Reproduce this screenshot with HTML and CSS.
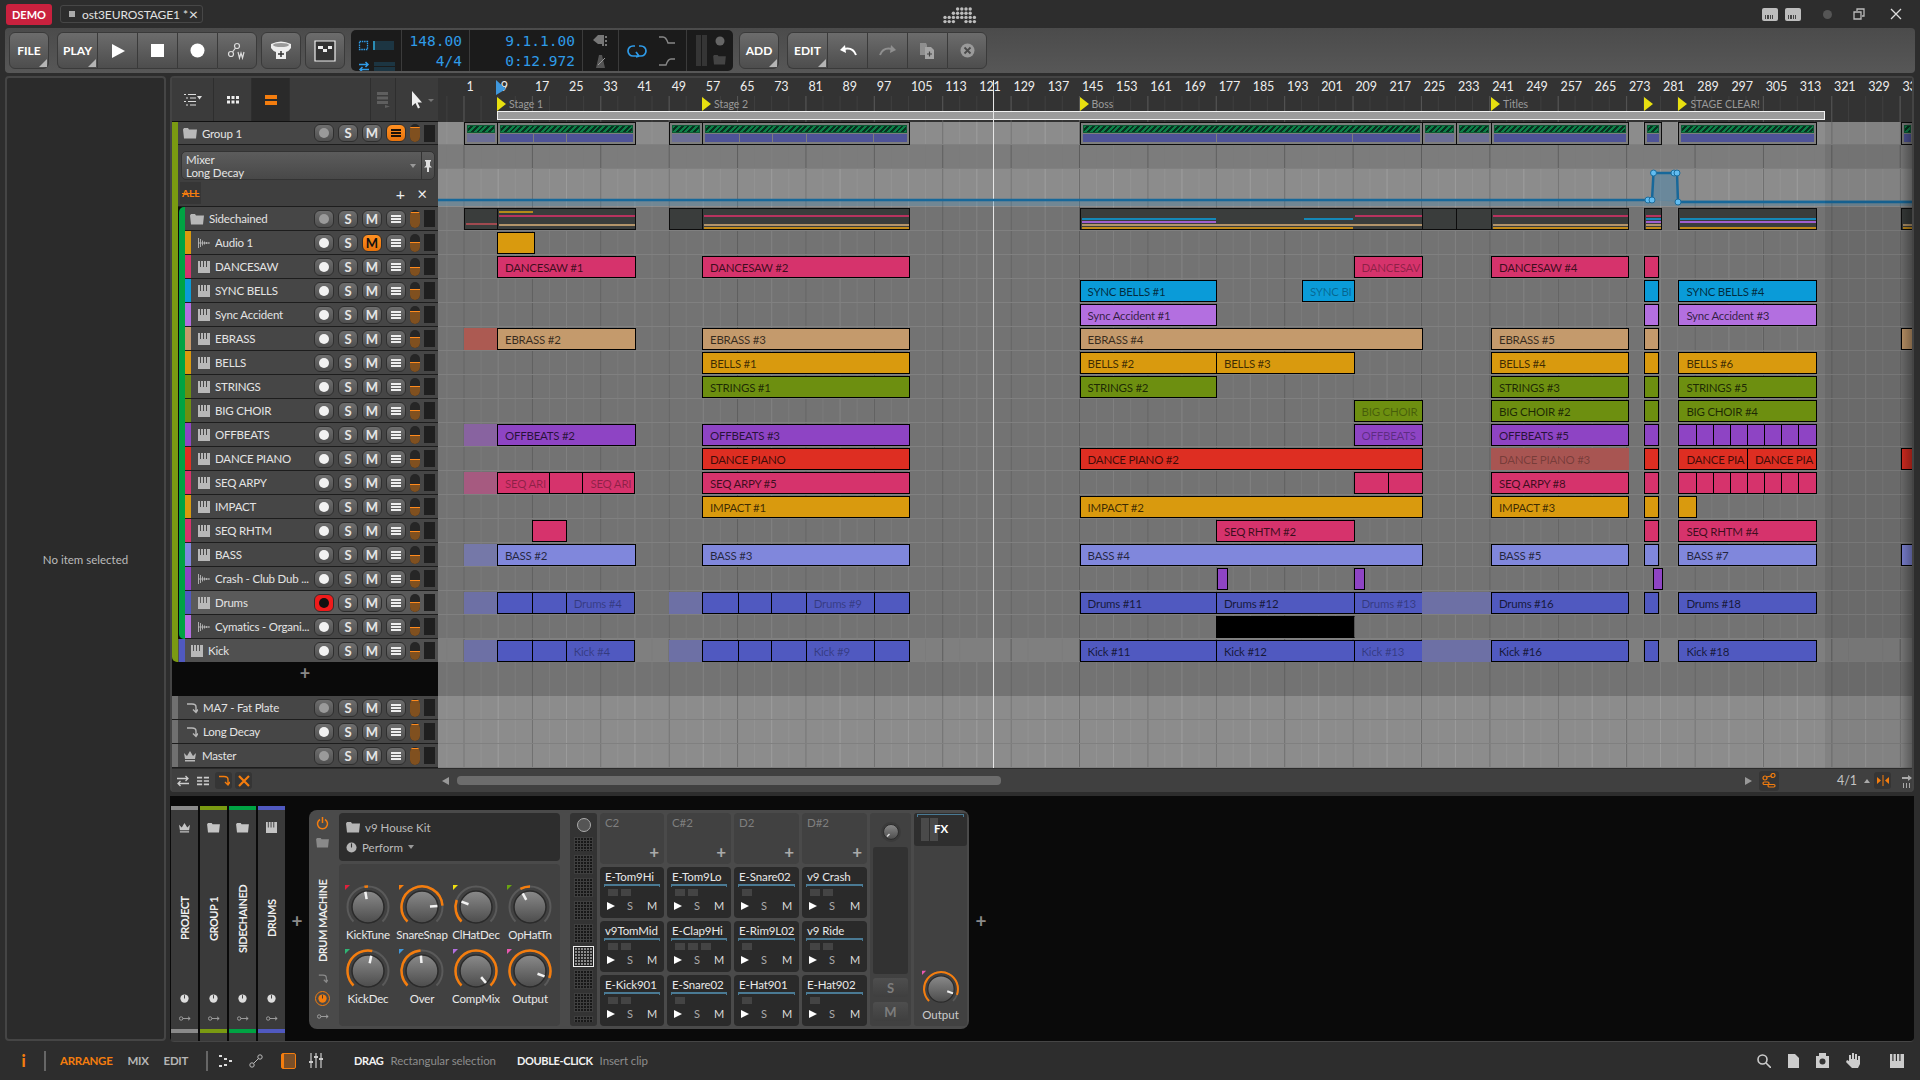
FILE: index.html
```html
<!DOCTYPE html>
<html lang="en">
<head>
    <meta charset="UTF-8">
    <title>Bitwig Studio - ost3EUROSTAGE1</title>
    <link rel="stylesheet" href="styles.css">
</head>
<body>

<!-- icon sprite -->
<svg class="sprite" width="0" height="0">
    <defs>
        <linearGradient id="knobFill" x1="0" y1="0" x2="0" y2="1">
            <stop offset="0" stop-color="#8a8a8a"/>
            <stop offset="1" stop-color="#4c4c4c"/>
        </linearGradient>
    </defs>
    <symbol id="i-folder" viewBox="0 0 14 12"><path d="M0 2.500 1 1h4l1 1.500h8L13 11.500H1z" fill="currentColor"/></symbol>
    <symbol id="i-piano" viewBox="0 0 12 12"><path d="M0 0h2v6h1V0h2v6h1V0h2v6h1V0h3v12H0z" fill="currentColor"/></symbol>
    <symbol id="i-wave" viewBox="0 0 12 12"><path d="M.5 1v10M2.500 2v8M4.500 3.500v5M6.500 4.500v3M8.500 5v2M10.500 5.600v.8M0 6h12" fill="none" stroke="currentColor" stroke-width=".9"/></symbol>
    <symbol id="i-send" viewBox="0 0 12 12"><path d="M1 2h5q4 0 4 3v5M7 7.500l3 3 2-3" fill="none" stroke="currentColor" stroke-width="1.400"/></symbol>
    <symbol id="i-crown" viewBox="0 0 14 12"><path d="M1 3l3 3 3-5 3 5 3-3-1 6H2zM2 10h10v1.500H2z" fill="currentColor"/></symbol>
    <symbol id="i-key" viewBox="0 0 14 8"><g fill="none" stroke="currentColor"><circle cx="2.500" cy="4" r="2"/><path d="M4.500 4H13M10.500 2l2.500 2-2.500 2"/></g></symbol>
    <symbol id="i-dial" viewBox="0 0 12 12"><circle cx="6" cy="6" r="5.500" fill="currentColor"/><path d="M6 1.500V6" stroke="#333" stroke-width="1.200"/></symbol>
</svg>

<header class="titlebar">
    <span class="demo">DEMO</span>
    <span class="doc-tab"><i class="doc-dot"></i><span>ost3EUROSTAGE1 *</span><b>×</b></span>
    <svg class="logo" id="logo" width="34" height="18" viewBox="0 0 34 18"></svg>
    <div class="win-icons">
        <i class="mini-keys"></i>
        <i class="mini-keys"></i>
        <i class="win-dot"></i>
        <svg width="12" height="12" viewBox="0 0 12 12" fill="none" stroke="#bbb" stroke-width="1.300"><path d="M1 4h7v7H1zM4 3V1h7v7H9"/></svg>
        <svg width="12" height="12" viewBox="0 0 12 12" fill="none" stroke="#ddd" stroke-width="1.300"><path d="M1 1l10 10M11 1 1 11"/></svg>
    </div>
</header>

<section class="toolbar">
    <button class="tbtn menu">FILE</button>
    <div class="btn-group">
        <button class="tbtn menu">PLAY</button>
        <button class="tbtn"><svg width="16" height="16" viewBox="0 0 16 16"><path d="M2 1l13 7-13 7z" fill="#fff"/></svg></button>
        <button class="tbtn"><svg width="13" height="13" viewBox="0 0 13 13"><path d="M0 0h13v13H0z" fill="#fff"/></svg></button>
        <button class="tbtn"><svg width="15" height="15" viewBox="0 0 15 15"><circle cx="7.500" cy="7.500" r="7" fill="#fff"/></svg></button>
        <button class="tbtn"><svg width="20" height="18" viewBox="0 0 20 18" fill="none" stroke="#ddd" stroke-width="1.200"><circle cx="4" cy="12" r="2.500"/><circle cx="10" cy="4" r="2.500"/><path d="M5.500 10 8.500 6"/><path d="M11 10l1.500 6 1.500-5 1.500 5 1.500-6"/></svg></button>
    </div>
    <button class="tbtn solo"><svg width="24" height="22" viewBox="0 0 24 22"><path d="M2 4q10-5 20 0v4q-2 3-5 4v7H7v-7q-3-1-5-4z" fill="#eee"/><ellipse cx="12" cy="5" rx="8" ry="2" fill="#999"/><path d="M12 11v6M9 14h6" stroke="#333" stroke-width="1.500"/></svg></button>
    <button class="tbtn solo"><svg width="22" height="22" viewBox="0 0 22 22"><path d="M1 1h20v20H1z" fill="#333" stroke="#eee" stroke-width="1.200"/><path d="M4 6h5v3H4zM9 9h4v3H9zM14 6h4v3h-4z" fill="#eee"/></svg></button>

    <div class="transport">
        <div class="tp-cell tp-cpu">
            <div class="tp-line"><svg width="11" height="11" viewBox="0 0 11 11" fill="none" stroke="#2f9be8"><path d="M1.500 1.500h8v8h-8z" stroke-dasharray="1.500 .8" stroke-width="1.300"/></svg><i class="tp-meter"></i></div>
            <div class="tp-line"><svg width="12" height="12" viewBox="0 0 12 12" fill="none" stroke="#2f9be8" stroke-width="1.500"><path d="M1 3.500h9M7.500 1l2.500 2.500L7.500 6M11 8.500H2M4.500 6 2 8.500 4.500 11"/></svg><i class="tp-meter wide"></i></div>
        </div>
        <div class="tp-cell tp-num tp-tempo"><span>148.00</span><span>4/4</span></div>
        <div class="tp-cell tp-num tp-pos"><span>9.1.1.00</span><span>0:12.972</span></div>
        <div class="tp-cell tp-icons">
            <svg width="15" height="13" viewBox="0 0 15 13"><path d="M0 6l5-5h6v9H5zM12 2h2v2h-2zM12 6h2v2h-2zM9 10h2v2H9zM12 10h2v2h-2z" fill="#777"/></svg>
            <svg width="12" height="13" viewBox="0 0 12 13"><path d="M4 0h3l3 13H1z" fill="#555"/><path d="M3 10l7-7" stroke="#999"/></svg>
        </div>
        <div class="tp-cell tp-loop">
            <svg width="20" height="14" viewBox="0 0 20 14" fill="none" stroke="#2f9be8" stroke-width="1.700"><path d="M8 2H6a5 5 0 0 0 0 10h8a5 5 0 0 0 0-10h-2M9 8l3 4-3 1"/></svg>
            <div class="tp-curves">
                <svg width="16" height="9" viewBox="0 0 16 9" fill="none" stroke="#888" stroke-width="1.400"><path d="M0 1h4q3 0 5 6h7"/></svg>
                <svg width="16" height="9" viewBox="0 0 16 9" fill="none" stroke="#888" stroke-width="1.400"><path d="M0 8h7q2-6 5-6h4"/></svg>
            </div>
        </div>
        <div class="tp-cell tp-last">
            <i class="tp-bar"></i><i class="tp-bar"></i>
            <div class="tp-last-icons">
                <svg width="10" height="10" viewBox="0 0 10 10"><circle cx="5" cy="5" r="4.500" fill="#666"/></svg>
                <svg width="13" height="11" viewBox="0 0 14 12" color="#444"><use href="#i-folder"/></svg>
            </div>
        </div>
    </div>

    <button class="tbtn menu solo add">ADD</button>
    <div class="btn-group">
        <button class="tbtn menu">EDIT</button>
        <button class="tbtn"><svg width="18" height="12" viewBox="0 0 18 12" fill="none" stroke="#fff" stroke-width="2"><path d="M17 10Q14 2 5 4"/><path d="M6 0 1 5l6 3z" fill="#fff" stroke="none"/></svg></button>
        <button class="tbtn"><svg width="18" height="12" viewBox="0 0 18 12" fill="none" stroke="#8f8f8f" stroke-width="2"><path d="M1 10Q4 2 13 4"/><path d="M12 0l5 5-6 3z" fill="#8f8f8f" stroke="none"/></svg></button>
        <button class="tbtn"><svg width="15" height="16" viewBox="0 0 15 16"><path d="M0 0h6l1 2v10H0z" fill="#8f8f8f"/><path d="M5 4h6l3 3v9H5z" fill="#a5a5a5"/><path d="M9.500 8.500v5M7 11h5" stroke="#444" stroke-width="1.200"/></svg></button>
        <button class="tbtn"><svg width="15" height="15" viewBox="0 0 15 15"><circle cx="7.500" cy="7.500" r="7" fill="#9a9a9a"/><path d="M4.500 4.500l6 6M10.500 4.500l-6 6" stroke="#4a4a4a" stroke-width="1.800"/></svg></button>
    </div>
</section>

<main class="workspace">
    <aside class="inspector">No item selected</aside>

    <div class="main-col">
        <section class="arrange">
            <div class="arrange-top">
                <div class="track-list">
                    <div class="list-head">
                        <span class="head-cell wide"><svg width="18" height="13" viewBox="0 0 18 13" fill="none" stroke="#ddd"><path d="M0 1.500h2M4 1.500h8M2 5h2M6 5h6M0 8.500h2M4 8.500h8M2 12h2M6 12h6"/><path d="M13 3h5l-2.500 3.500z" fill="#ddd" stroke="none"/></svg></span>
                        <span class="head-cell"><svg width="12" height="12" viewBox="0 0 12 12"><path d="M0 0h3v3H0zM4.500 0h3v3h-3zM9 0h3v3H9zM0 4.500h3v3H0zM4.500 4.500h3v3h-3zM9 4.500h3v3H9z" fill="#eee" transform="translate(0 2)"/></svg></span>
                        <span class="head-cell active"><svg width="12" height="10" viewBox="0 0 12 10"><path d="M0 0h12v4H0zM0 6h12v4H0z" fill="#f47d0e"/></svg></span>
                        <span class="head-gap"></span>
                        <span class="head-cell narrow"><svg width="13" height="16" viewBox="0 0 13 16" fill="#5f5f5f"><path d="M0 0h11v3H0zM0 4.500h11v3H0zM0 9h11v3H0zM8 13l5 1.500L8 16z"/></svg></span>
                        <span class="head-cell tool"><svg width="24" height="18" viewBox="0 0 24 18"><path d="M1 0v15l3.500-3 2.500 5.500 2-1-2.500-5H11z" fill="#eee"/><path d="M17 8h6l-3 3z" fill="#777"/></svg></span>
                    </div>

                    <div class="group-olive">
                        <div class="track" id="row-group"></div>
                        <div class="mixer-head">
                            <div class="mixer-select">
                                <div class="mixer-names"><span>Mixer</span><span>Long Decay</span></div>
                                <i class="caret"></i>
                                <span class="pin"><svg width="8" height="12" viewBox="0 0 8 12"><path d="M1 0h6v1.500H6v4l2 2H5v4.500H3V7.500H0l2-2v-4H1z" fill="#ddd"/></svg></span>
                            </div>
                            <div class="mixer-tools">
                                <span class="all-tag">ALL</span>
                                <span class="mixer-plus">+</span>
                                <span class="mixer-x">×</span>
                            </div>
                        </div>
                        <div class="group-green" id="inner-tracks"></div>
                        <div class="track" id="row-kick"></div>
                    </div>
                    <div class="add-track">+</div>
                    <div id="fx-tracks"></div>
                </div>

                <div class="timeline">
                    <div class="ruler">
                        <div class="ruler-nums" id="ruler-nums"></div>
                        <div class="ruler-markers" id="ruler-markers"></div>
                        <div class="loop-row"><i class="loop-bar"></i></div>
                    </div>
                    <div class="lanes" id="lanes"></div>
                    <i class="playhead"></i>
                    <svg class="playhead-flag" width="10" height="15" viewBox="0 0 10 15"><path d="M0 0l10 9-10 6z" fill="#3f97dc"/></svg>
                    <svg class="automation" width="1474" height="40" viewBox="0 0 1474 40">
                        <rect x="0" y="32" width="1474" height="6" fill="#2a7aa8" opacity=".28"/>
                        <path d="M1215 32 L1215.500 5 L1239 5 L1240 34 Z" fill="#5f87a0" opacity=".75"/>
                        <path d="M0 32H1210M1214 32 1215.500 5H1239L1240 34H1474" fill="none" stroke="#17689a" stroke-width="2.500"/>
                        <g fill="#62bdf2" stroke="#1d6d9c">
                            <circle cx="1210" cy="32" r="3"/><circle cx="1214" cy="32" r="3"/>
                            <circle cx="1215.500" cy="5" r="3"/><circle cx="1236" cy="5" r="3"/>
                            <circle cx="1239" cy="5" r="3"/><circle cx="1240" cy="34" r="3"/>
                        </g>
                    </svg>
                    <i class="past-range"></i>
                    <i class="edge-shade"></i>
                </div>
            </div>

            <div class="arrange-bar">
                <div class="bar-left">
                    <svg class="bar-swap" width="14" height="12" viewBox="0 0 14 12" fill="none" stroke="#ccc" stroke-width="1.300"><path d="M1 3.500h11M9.500 1 12 3.500 9.500 6M13 8.500H2M4.500 6 2 8.500 4.500 11"/></svg>
                    <svg class="bar-list" width="12" height="10" viewBox="0 0 14 10" fill="#ccc"><path d="M0 0h6v2H0zM0 4h6v2H0zM0 8h6v2H0zM8 0h6v2H8zM8 4h6v2H8zM8 8h6v2H8z"/></svg>
                    <span class="bar-cell"><svg width="12" height="13" viewBox="0 0 12 12" color="#f47d0e"><use href="#i-send"/></svg></span>
                    <span class="bar-cell"><svg width="12" height="12" viewBox="0 0 12 12" fill="none" stroke="#f47d0e" stroke-width="2.200"><path d="M1 1l10 10M11 1 1 11"/></svg></span>
                </div>
                <i class="tri-left"></i>
                <div class="scroll-track"><i class="scroll-thumb"></i></div>
                <i class="tri-right"></i>
                <span class="bar-cell link"><svg width="14" height="15" viewBox="0 0 14 15" fill="none" stroke="#f47d0e" stroke-width="1.200"><circle cx="3" cy="5" r="2"/><circle cx="11" cy="2.500" r="2"/><path d="M4.500 4 9 3"/><rect x="1" y="9" width="6" height="2.500" rx="1.200"/><rect x="6" y="11.500" width="7" height="2.500" rx="1.200"/></svg></span>
                <span class="grid-val">4/1</span>
                <i class="tri-up"></i>
                <span class="bar-cell snap"><svg width="12" height="11" viewBox="0 0 12 11" fill="#f47d0e"><path d="M0 2l4 3.500L0 9zM12 2 8 5.500 12 9zM5.500 0h1v11h-1z"/></svg></span>
                <svg class="bar-last" width="10" height="14" viewBox="0 0 10 14" fill="#aaa"><path d="M0 3h6V1l4 3-4 3V5H0zM1 9h1v5H1zM4 9h1v5H4zM7 9h1v5H7z"/></svg>
            </div>
        </section>

        <section class="devices">
            <div class="chain-cards" id="chain-cards"></div>
            <span class="dev-plus">+</span>
            <div class="device">
                <div class="dev-side">
                    <svg class="dev-power" width="13" height="13" viewBox="0 0 13 13" fill="none" stroke="#f47d0e" stroke-width="1.500"><path d="M4 2.500a5 5 0 1 0 5 0M6.500 0v6"/></svg>
                    <svg width="13" height="11" viewBox="0 0 14 12" color="#8a8a8a"><use href="#i-folder"/></svg>
                    <span class="dev-title">DRUM MACHINE</span>
                    <svg width="10" height="11" viewBox="0 0 12 12" color="#8a8a8a"><use href="#i-send"/></svg>
                    <span class="dev-ring"><svg width="9" height="9" viewBox="0 0 12 12" color="#f47d0e"><use href="#i-dial"/></svg></span>
                    <svg width="12" height="7" viewBox="0 0 14 8" color="#aaa"><use href="#i-key"/></svg>
                </div>

                <div class="dev-main">
                    <div class="preset">
                        <div class="preset-line"><svg width="14" height="12" viewBox="0 0 14 12" color="#b5b5b5"><use href="#i-folder"/></svg>v9 House Kit</div>
                        <div class="preset-line"><svg width="11" height="11" viewBox="0 0 12 12" color="#b5b5b5"><use href="#i-dial"/></svg>Perform <i class="caret"></i></div>
                    </div>
                    <div class="knob-grid" id="knob-grid"></div>
                </div>

                <div class="note-col" id="note-col"></div>
                <div class="pads" id="pads"></div>

                <div class="chain-mix">
                    <svg class="mix-knob" width="22" height="22" viewBox="-11 -11 22 22"><circle r="10" fill="#3a3a3a"/><circle r="7.500" fill="url(#knobFill)" stroke="#2a2a2a"/><path d="M-1.500 2-4 4.500" stroke="#ddd" stroke-width="1.500"/></svg>
                    <div class="mix-fader"></div>
                    <span class="mix-btn">S</span>
                    <span class="mix-btn">M</span>
                </div>

                <div class="fx-col">
                    <div class="fx-box"><i class="fx-bracket"></i><i class="fx-strip"></i><i class="fx-strip"></i><b>FX</b></div>
                    <div class="fx-output" id="fx-output"></div>
                </div>
            </div>
            <span class="dev-plus after">+</span>
        </section>
    </div>
</main>

<footer class="statusbar">
    <span class="st-info">i</span>
    <i class="st-sep"></i>
    <span class="st-tab on">ARRANGE</span>
    <span class="st-tab">MIX</span>
    <span class="st-tab">EDIT</span>
    <i class="st-sep"></i>
    <svg class="st-first" width="14" height="12" viewBox="0 0 14 12" fill="#ddd"><path d="M0 0h3v2H0zM5 3h3v2H5zM10 5h3v2h-3zM0 10h3v2H0zM5 9h3v2H5z"/></svg>
    <svg width="14" height="14" viewBox="0 0 14 14" fill="none" stroke="#bbb"><circle cx="3" cy="11" r="2.200"/><circle cx="11" cy="3" r="2.200"/><path d="M4.500 9.500l5-5"/></svg>
    <span class="st-panel"><i></i></span>
    <svg width="16" height="15" viewBox="0 0 16 15" fill="none" stroke="#ccc" stroke-width="1.200"><path d="M3 0v15M8 0v15M13 0v15"/><path d="M1 9h4M6 4h4M11 6h4" stroke-width="2"/></svg>
    <span class="st-hint first"><b>DRAG</b>Rectangular selection</span>
    <span class="st-hint"><b>DOUBLE-CLICK</b>Insert clip</span>
    <div class="st-right">
        <svg width="14" height="14" viewBox="0 0 14 14" fill="none" stroke="#ccc" stroke-width="1.600"><circle cx="5.500" cy="5.500" r="4.500"/><path d="M9 9l5 5"/></svg>
        <svg width="11" height="14" viewBox="0 0 11 14" fill="#ccc"><path d="M0 0h7l4 4v10H0z"/></svg>
        <svg width="13" height="15" viewBox="0 0 13 15"><path d="M3 3V0h7v3h3v12H0V3z" fill="#ccc"/><circle cx="6.500" cy="8.500" r="3" fill="#333"/></svg>
        <svg width="14" height="15" viewBox="0 0 14 15" fill="#ccc"><path d="M3 8V2h2v4h1V0h2v6h1V1h2v6h1V3h2v8l-2 4H6L0 9l1-2z"/></svg>
        <svg class="st-piano" width="14" height="14" viewBox="0 0 12 12" color="#ccc"><use href="#i-piano"/></svg>
    </div>
</footer>

<script src="script.js"></script>
</body>
</html>
```

FILE: styles.css
```css
/* base */
* {
    box-sizing: border-box;
}

html, body {
    margin: 0;
    height: 100%;
}

body {
    width: 1920px;
    height: 1080px;
    overflow: hidden;
    display: flex;
    flex-direction: column;
    background-color: #2d2d2d;
    color: #ddd;
    font-family: Lato, "Open Sans", sans-serif;
    font-size: 12px;
}

i {
    display: block;
}

.sprite {
    position: absolute;
}

/* title bar */
.titlebar {
    height: 28px;
    flex: none;
    display: flex;
    align-items: center;
    padding-left: 6px;
    position: relative;
}

.demo {
    width: 46px;
    height: 21px;
    line-height: 21px;
    text-align: center;
    background-color: #c9213e;
    border-radius: 3px;
    color: #fff;
    font-weight: 700;
    font-size: 11px;
}

.doc-tab {
    margin-left: 8px;
    width: 143px;
    height: 18px;
    display: flex;
    align-items: center;
    padding-left: 8px;
    border: 1px solid #474747;
    border-radius: 3px;
    color: #e2e2e2;
    font-size: 12px;
    letter-spacing: -0.1px;
    white-space: nowrap;
}

.doc-tab b {
    margin-left: auto;
    margin-right: 4px;
    font-size: 16px;
    font-weight: 400;
    line-height: 16px;
}

.doc-dot {
    width: 6px;
    height: 6px;
    margin-right: 7px;
    background-color: #aaa;
}

.logo {
    position: absolute;
    left: 943px;
    top: 7px;
}

.win-icons {
    margin-left: auto;
    display: flex;
    align-items: center;
    padding-right: 18px;
}

.mini-keys {
    width: 16px;
    height: 13px;
    margin-right: 7px;
    background:
        repeating-linear-gradient(90deg, #444 0 1px, transparent 1px 2.500px) 3px 7px / 10px 4px no-repeat,
        #bdbdbd;
    border-radius: 2px;
}

.win-dot {
    width: 9px;
    height: 9px;
    margin: 0 21px 0 15px;
    border-radius: 50%;
    background-color: #555;
}

.win-icons svg:last-child {
    margin-left: 25px;
}

/* tool bar */
.toolbar {
    height: 45px;
    flex: none;
    margin: 0 5px;
    padding-left: 4px;
    display: flex;
    align-items: center;
    background: linear-gradient(#4b4b4b, #575757);
    border-radius: 4px;
}

.btn-group {
    display: flex;
    margin-left: 8px;
}

.tbtn {
    width: 40px;
    height: 37px;
    padding: 0;
    display: flex;
    align-items: center;
    justify-content: center;
    position: relative;
    background: linear-gradient(#6c6c6c, #4d4d4d);
    border: 1px solid #3a3a3a;
    border-right-width: 0;
    color: #fff;
    font-family: Lato, sans-serif;
    font-size: 12px;
    font-weight: 700;
}

.toolbar > .tbtn {
    border-radius: 6px;
    border-right-width: 1px;
}

.toolbar > .solo {
    margin-left: 4px;
}

.toolbar > .add {
    margin-left: 6px;
}

.btn-group .tbtn:first-child {
    border-radius: 6px 0 0 6px;
}

.btn-group .tbtn:last-child {
    border-radius: 0 6px 6px 0;
    border-right-width: 1px;
}

.menu::after {
    content: "";
    position: absolute;
    right: 1px;
    bottom: 1px;
    border-left: 8px solid transparent;
    border-bottom: 8px solid #b5b5b5;
}

.transport {
    width: 382px;
    height: 41px;
    margin-left: 6px;
    display: flex;
    background-color: #1b1b1b;
    border-radius: 5px;
    overflow: hidden;
}

.tp-cell {
    border-right: 1px solid #3b3b3b;
    height: 100%;
}

.tp-cell:last-child {
    border-right: 0;
}

.tp-cpu {
    width: 51px;
    padding: 5px 0 0 7px;
}

.tp-line {
    height: 21px;
    display: flex;
    align-items: center;
    gap: 4px;
}

.tp-meter {
    width: 21px;
    height: 9px;
    background: linear-gradient(90deg, #2a8db5 2px, #1c3542 2px);
}

.tp-meter.wide {
    background: linear-gradient(#1c3542 40%, transparent 40% 60%, #1c3542 60%);
}

.tp-num {
    display: flex;
    flex-direction: column;
    align-items: flex-end;
    justify-content: center;
    gap: 2px;
    color: #2f9be8;
    font-family: "DejaVu Sans Mono", monospace;
    font-size: 14.500px;
    line-height: 18px;
    padding-right: 7px;
}

.tp-tempo {
    width: 68px;
}

.tp-pos {
    width: 113px;
}

.tp-icons {
    width: 36px;
    display: flex;
    flex-direction: column;
    align-items: center;
    justify-content: center;
    gap: 8px;
}

.tp-loop {
    width: 68px;
    display: flex;
    align-items: center;
    justify-content: space-between;
    padding: 0 11px 0 8px;
}

.tp-curves {
    display: flex;
    flex-direction: column;
    gap: 12px;
}

.tp-last {
    width: 46px;
    display: flex;
    align-items: center;
    padding-left: 9px;
    gap: 1px;
}

.tp-bar {
    width: 5px;
    height: 31px;
    background-color: #353535;
}

.tp-last-icons {
    display: flex;
    flex-direction: column;
    align-items: center;
    gap: 8px;
    margin-left: 5px;
}

/* main layout */
.workspace {
    flex: none;
    height: 965px;
    margin-top: 3px;
    padding: 0 6px 0 5px;
    display: flex;
}

.inspector {
    width: 161px;
    display: flex;
    align-items: center;
    justify-content: center;
    padding-top: 2px;
    background-color: #2b2b2b;
    border: 2px solid #454545;
    border-radius: 4px;
    color: #bbb;
    font-size: 11.500px;
}

.main-col {
    width: 1744px;
    margin-left: 4px;
    display: flex;
    flex-direction: column;
}

.arrange {
    height: 716px;
    flex: none;
    padding: 2px 2px 0 2px;
    background-color: #444;
    border-radius: 4px;
    display: flex;
    flex-direction: column;
}

.arrange-top {
    height: 690px;
    flex: none;
    display: flex;
}

/* track list */
.track-list {
    width: 266px;
    flex: none;
    background-color: #0a0a0a;
}

.list-head {
    height: 44px;
    display: flex;
    background-color: #3b3b3b;
    border-bottom: 1px solid #111;
}

.head-cell {
    width: 38px;
    display: flex;
    align-items: center;
    justify-content: center;
    border-right: 1px solid #2e2e2e;
}

.head-cell.wide {
    width: 42px;
}

.head-cell.active {
    background-color: #2a2a2a;
}

.head-cell.narrow {
    width: 26px;
    border-left: 1px solid #2e2e2e;
}

.head-cell.tool {
    width: 42px;
    padding-left: 15px;
    justify-content: flex-start;
    border-right: 0;
}

.head-gap {
    flex: 1;
}

.group-olive {
    border-left: 6px solid #7a9a12;
    border-radius: 0 0 0 5px;
}

.group-green {
    margin-left: 1px;
    border-left: 6px solid #00a343;
    border-radius: 5px 0 0 5px;
}

.track {
    height: 24px;
    display: flex;
    align-items: center;
    background-color: #464646;
    border-bottom: 1px solid #1d1d1d;
    color: #e4e4e4;
    font-size: 11.500px;
    letter-spacing: -0.2px;
}

#row-group {
    height: 23px;
}

#row-kick {
    height: 23px;
    background-color: #505050;
    border-bottom: 0;
}

.track.selected {
    background-color: #5a5a5a;
}

.track-color {
    width: 6px;
    height: 100%;
    flex: none;
}

.track-icon {
    flex: none;
    margin-right: 5px;
    color: #b8b8b8;
}

.track-name {
    flex: 1;
    white-space: nowrap;
    overflow: hidden;
}

.track-ctrl {
    width: 124px;
    flex: none;
    display: flex;
    align-items: center;
    gap: 4px;
}

.ctl {
    width: 20px;
    height: 18px;
    display: flex;
    align-items: center;
    justify-content: center;
    background: linear-gradient(#6e6e6e, #4f4f4f);
    border: 1px solid #2f2f2f;
    border-radius: 6px;
    color: #e6e6e6;
    font-size: 13px;
    font-weight: 700;
    letter-spacing: 0;
}

.ctl.rec i {
    width: 10px;
    height: 10px;
    border-radius: 50%;
    background-color: #f2f2f2;
}

.ctl.rec.off i {
    background-color: #9a9a9a;
}

.ctl.rec.arm {
    background: #ef1b1b;
}

.ctl.rec.arm i {
    background-color: #111;
}

.ctl.on {
    background: linear-gradient(#ff9022, #e8730c);
    color: #111;
}

.ctl.lines i {
    width: 10px;
    height: 8px;
    background: repeating-linear-gradient(#eee 0 2px, transparent 2px 3px);
}

.ctl.on.lines i {
    background: repeating-linear-gradient(#1d1208 0 2px, transparent 2px 3px);
}

.fader {
    width: 10px;
    height: 18px;
    display: flex;
    flex-direction: column;
    justify-content: flex-end;
    background-color: #262626;
    border-radius: 5px;
    overflow: hidden;
}

.fader i {
    background-color: #80501f;
    border-top: 1px solid #ff8a1c;
}

.meter {
    width: 11px;
    height: 17px;
    background-color: #1f1f1f;
}

.mixer-head {
    height: 62px;
    background-color: #3f3f3f;
    padding: 6px 3px 0 3px;
    border-bottom: 1px solid #1d1d1d;
}

.mixer-select {
    height: 29px;
    display: flex;
    align-items: center;
    background: linear-gradient(#5c5c5c, #484848);
    border: 1px solid #333;
    border-radius: 5px;
    color: #e4e4e4;
    font-size: 11.500px;
    letter-spacing: -0.1px;
    line-height: 13px;
}

.mixer-names {
    flex: 1;
    display: flex;
    flex-direction: column;
    padding-left: 4px;
}

.caret {
    border-left: 3px solid transparent;
    border-right: 3px solid transparent;
    border-top: 4px solid #999;
}

.mixer-select .caret {
    margin-right: 5px;
}

.pin {
    width: 13px;
    height: 100%;
    display: flex;
    align-items: center;
    justify-content: center;
    border-left: 1px solid #333;
}

.mixer-tools {
    display: flex;
    align-items: center;
    height: 26px;
    margin-left: -1px;
}

.all-tag {
    padding: 5px 2px;
    background-color: #363636;
    color: #f47d0e;
    font-size: 10px;
    font-weight: 700;
    text-decoration: line-through;
}

.mixer-plus {
    margin-left: auto;
    margin-right: 12px;
    color: #eee;
    font-size: 16px;
}

.mixer-x {
    margin-right: 8px;
    color: #eee;
    font-size: 17px;
}

.add-track {
    height: 34px;
    display: flex;
    align-items: flex-start;
    justify-content: center;
    color: #888;
    font-size: 18px;
    font-weight: 700;
    line-height: 20px;
    padding-top: 1px;
}

.track.fx .track-color {
    width: 6px;
    background-color: #707070;
}

/* timeline */
.timeline {
    flex: 1;
    position: relative;
    display: flex;
    flex-direction: column;
    overflow: hidden;
}

.ruler {
    height: 44px;
    flex: none;
    background:
        linear-gradient(90deg, #555 1px, transparent 1px) 25.500px 0 / 68.400px 100%,
        linear-gradient(90deg, #3f3f3f 1px, transparent 1px) 25.500px 0 / 17.100px 100%,
        #333;
}

.ruler-nums {
    height: 18px;
    padding-left: 25.500px;
    display: flex;
    align-items: flex-end;
    background-color: #333;
    color: #eee;
    font-size: 12.500px;
    letter-spacing: -0.1px;
    line-height: 18px;
}

.ruler-nums span {
    width: 34.200px;
    flex: none;
    padding-left: 3px;
    white-space: nowrap;
}

.ruler-markers {
    height: 15px;
    position: relative;
}

.marker {
    position: absolute;
    top: 1px;
    display: flex;
    align-items: center;
    color: #9a9a9a;
    font-size: 10.500px;
    line-height: 13px;
}

.marker::before {
    content: "";
    margin-right: 3px;
    border-top: 7px solid transparent;
    border-bottom: 7px solid transparent;
    border-left: 9px solid #e8e010;
}

.loop-row {
    height: 11px;
    padding-top: 0;
}

.loop-bar {
    margin-left: 59px;
    width: 1328px;
    height: 9px;
    background-color: #9b9b9b;
    border: 1px solid #f2f2f2;
}

.lanes {
    flex: 1;
}

.lane {
    position: relative;
    height: 24px;
    border-bottom: 1px solid #808080;
    background-color: #737373;
    background-image:
        linear-gradient(90deg, #5d5d5d 1px, transparent 1px),
        linear-gradient(90deg, #808080 1px, transparent 1px),
        linear-gradient(90deg, #7b7b7b 1px, transparent 1px);
    background-size: 68.400px 100%, 34.200px 100%, 17.100px 100%;
    background-position: 25.500px 0;
}

.lane.bright {
    background-color: #8c8c8c;
    border-bottom-color: #808080;
    background-image:
        linear-gradient(90deg, #6c6c6c 1px, transparent 1px),
        linear-gradient(90deg, #9b9b9b 1px, transparent 1px),
        linear-gradient(90deg, #939393 1px, transparent 1px);
}

.lane.mid {
    background-color: #7c7c7c;
}

.lane.kick {
    background-color: #7f7f7f;
    height: 23px;
}

.lane.group-lane {
    height: 23px;
}

.lane.tall {
    height: 38px;
    border-bottom: 0;
}

.lane.blank {
    height: 34px;
    border-bottom: 0;
}

.clip {
    position: absolute;
    top: 1px;
    height: 22px;
    padding-left: 7px;
    border: 1px solid #000;
    color: rgba(0, 0, 0, 0.72);
    font-size: 11.500px;
    letter-spacing: -0.25px;
    line-height: 22px;
    white-space: nowrap;
    overflow: hidden;
}

.clip.dim {
    color: rgba(0, 0, 0, 0.34);
}

.clip.ghost {
    border-color: transparent;
}

.clip.black {
    background-color: #000;
    border-right-color: #555;
}

.fold {
    padding: 1px;
    background-color: #3a3d3c;
    border-color: #0c0c0c;
}

.fold.top {
    top: 0;
    height: 23px;
    padding: 2px;
    background-color: #7d7d7d;
    display: flex;
    flex-direction: column;
    gap: 1px;
}

.hatch {
    height: 8px;
    flex: none;
    background: repeating-linear-gradient(135deg, #0d8048 0 2px, #08301f 2px 4px);
    border: 1px solid #0c5a34;
}

.lowers {
    flex: 1;
    display: flex;
    gap: 1px;
}

.lowers i {
    background-color: #4e5397;
}

.lowers.pale i {
    background-color: #6b6e94;
}

.stripe {
    position: absolute;
    height: 2px;
}

.playhead {
    position: absolute;
    left: 555px;
    top: 2px;
    bottom: 0;
    width: 1px;
    background-color: #e6e6e6;
}

.playhead-flag {
    position: absolute;
    left: 58px;
    top: 2px;
}

.automation {
    position: absolute;
    left: 0;
    top: 90px;
}

.past-range {
    position: absolute;
    left: 1387px;
    right: 0;
    top: 44px;
    bottom: 0;
    background-color: rgba(0, 0, 0, 0.07);
}

.edge-shade {
    position: absolute;
    right: 0;
    top: 44px;
    bottom: 0;
    width: 12px;
    background: linear-gradient(90deg, rgba(0, 0, 0, 0), rgba(0, 0, 0, 0.3));
}

/* bottom bar of the arranger */
.arrange-bar {
    flex: 1;
    display: flex;
    align-items: center;
    padding: 0 0 0 4px;
    border-top: 1px solid #2b2b2b;
    background-color: #404040;
}

.bar-left {
    width: 267px;
    display: flex;
    align-items: center;
    gap: 3px;
}

.bar-swap {
    margin-right: 4px;
}

.bar-list {
    margin-right: 3px;
}

.bar-cell {
    width: 17px;
    height: 17px;
    display: flex;
    align-items: center;
    justify-content: center;
    background-color: #353535;
    border-radius: 3px;
}

.tri-left {
    border-top: 4px solid transparent;
    border-bottom: 4px solid transparent;
    border-right: 7px solid #999;
}

.scroll-track {
    width: 1287px;
    margin-left: 8px;
}

.scroll-thumb {
    width: 544px;
    height: 9px;
    background-color: #6c6c6c;
    border-radius: 4px;
}

.tri-right {
    margin-left: 6px;
    border-top: 4px solid transparent;
    border-bottom: 4px solid transparent;
    border-left: 7px solid #999;
}

.bar-cell.link {
    width: 20px;
    height: 20px;
    margin-left: 7px;
}

.grid-val {
    margin-left: 58px;
    color: #c4c4c4;
    font-size: 12.500px;
}

.tri-up {
    margin-left: 7px;
    border-left: 3px solid transparent;
    border-right: 3px solid transparent;
    border-bottom: 4px solid #aaa;
}

.bar-cell.snap {
    margin-left: 4px;
}

.bar-last {
    margin-left: 11px;
}

/* device panel */
.devices {
    flex: 1;
    margin-top: 4px;
    display: flex;
    align-items: flex-start;
    background-color: #0a0a0a;
    border-bottom: 1px solid #454545;
    border-radius: 0 0 4px 4px;
}

.chain-cards {
    display: flex;
    gap: 2px;
    margin-left: 1px;
    margin-top: 10px;
}

.card {
    width: 27px;
    height: 235px;
    display: flex;
    flex-direction: column;
    align-items: center;
    background-color: #3a3a3a;
    color: #c4c4c4;
}

.card-strip {
    width: 100%;
    height: 4px;
    flex: none;
}

.card-icon {
    margin-top: 12px;
}

.card-label {
    flex: 1;
    margin-top: 10px;
    display: flex;
    align-items: center;
    justify-content: center;
    writing-mode: vertical-rl;
    transform: rotate(180deg);
    color: #f0f0f0;
    font-size: 11px;
    font-weight: 700;
    letter-spacing: -0.5px;
}

.card-dial {
    margin-bottom: 12px;
}

.card-key {
    margin-bottom: 7px;
}

.card-strip.low {
    margin-bottom: 8px;
}

.dev-plus {
    width: 24px;
    flex: none;
    margin-top: 113px;
    text-align: center;
    color: #8a8a8a;
    font-size: 19px;
    font-weight: 700;
}

.device {
    width: 660px;
    height: 219px;
    flex: none;
    margin-top: 14px;
    padding: 3px 2px 3px 0;
    display: flex;
    background-color: #4a4a4a;
    border-radius: 8px;
}

.dev-side {
    width: 27px;
    flex: none;
    display: flex;
    flex-direction: column;
    align-items: center;
    padding: 4px 0 6px 0;
    gap: 7px;
}

.dev-title {
    flex: 1;
    margin-top: 20px;
    display: flex;
    align-items: center;
    justify-content: center;
    writing-mode: vertical-rl;
    transform: rotate(180deg);
    color: #eee;
    font-size: 11px;
    font-weight: 700;
    letter-spacing: -0.5px;
}

.dev-ring {
    width: 15px;
    height: 15px;
    display: flex;
    align-items: center;
    justify-content: center;
    border: 1.500px solid #f47d0e;
    border-radius: 50%;
}

.dev-main {
    width: 221px;
    flex: none;
    margin-left: 3px;
    display: flex;
    flex-direction: column;
    gap: 3px;
}

.preset {
    height: 48px;
    padding-top: 4px;
    background-color: #2d2d2d;
    border-radius: 4px;
    color: #bcbcbc;
    font-size: 11.500px;
}

.preset-line {
    height: 20px;
    display: flex;
    align-items: center;
    gap: 5px;
    padding-left: 7px;
}

.knob-grid {
    flex: 1;
    display: grid;
    grid-template-columns: repeat(4, 54px);
    grid-auto-rows: 64px;
    padding: 20px 0 0 2px;
    background-color: #414141;
    border-radius: 4px;
}

.knob {
    display: flex;
    flex-direction: column;
    align-items: center;
    color: #eaeaea;
    font-size: 11.500px;
    letter-spacing: -0.15px;
    line-height: 14px;
    white-space: nowrap;
}

.knob span {
    margin-top: -2px;
}

.note-col {
    width: 27px;
    flex: none;
    margin-left: 10px;
    display: flex;
    flex-direction: column;
    align-items: center;
    padding-top: 5px;
    gap: 4px;
    background-color: #333;
    border-radius: 3px;
}

.note-clock {
    width: 14px;
    height: 14px;
    margin-bottom: 1px;
    border: 1.500px solid #aaa;
    border-radius: 50%;
    background-color: #555;
}

.note-block {
    width: 19px;
    height: 19px;
    background:
        linear-gradient(90deg, #3f3f3f 1px, transparent 1px) 0 0 / 3px 100%,
        linear-gradient(#3f3f3f 1px, transparent 1px) 0 0 / 100% 3px,
        #181818;
}

.note-block.first {
    height: 14px;
}

.note-block.sel {
    background:
        linear-gradient(90deg, #222 1px, transparent 1px) 0 0 / 3px 100%,
        linear-gradient(#222 1px, transparent 1px) 0 0 / 100% 3px,
        #8a8a8a;
    outline: 1px solid #eee;
}

.note-block.tiny {
    height: 6px;
}

.pads {
    margin-left: 3px;
    display: grid;
    grid-template-columns: 64px 64px 65px 65px;
    grid-template-rows: repeat(4, 51px);
    gap: 3px;
}

.pad {
    padding: 2px 5px 0 5px;
    background-color: #2a2a2a;
    border-radius: 4px;
    color: #e8e8e8;
    font-size: 11.500px;
    letter-spacing: -0.1px;
    line-height: 15px;
    white-space: nowrap;
}

.pad.empty {
    display: flex;
    flex-direction: column;
    background-color: #414141;
    color: #7f7f7f;
}

.pad-plus {
    margin-top: auto;
    margin-bottom: 5px;
    align-self: flex-end;
    color: #aaa;
    font-size: 17px;
    font-weight: 700;
    line-height: 14px;
}

.pad-bracket {
    height: 3px;
    margin: 0 -1px 2px -1px;
    border: 1px solid #4a7a94;
    border-width: 2px 1px 0 1px;
}

.pad-cells {
    height: 7px;
    display: flex;
    gap: 3px;
    padding-left: 3px;
}

.pad-cells i {
    width: 10px;
    background-color: #444;
}

.pad-foot {
    margin-top: 4px;
    display: flex;
    align-items: center;
    color: #aaa;
    font-size: 11px;
    line-height: 12px;
    padding-left: 2px;
}

.pad-foot span:first-of-type {
    margin-left: 12px;
}

.pad-foot span:last-of-type {
    margin-left: auto;
    margin-right: 2px;
    color: #ddd;
}

.pad-play {
    border-top: 4px solid transparent;
    border-bottom: 4px solid transparent;
    border-left: 8px solid #fff;
}

.chain-mix {
    width: 41px;
    flex: none;
    margin-left: 3px;
    padding: 8px 3px 0 3px;
    display: flex;
    flex-direction: column;
    align-items: center;
    background-color: #414141;
    border-radius: 3px;
}

.mix-knob {
    margin-bottom: 4px;
}

.mix-fader {
    width: 100%;
    height: 128px;
    margin-bottom: 4px;
    background-color: #323232;
    border-radius: 3px;
}

.mix-btn {
    width: 100%;
    height: 19px;
    margin-bottom: 5px;
    display: flex;
    align-items: center;
    justify-content: center;
    background: linear-gradient(#4e4e4e, #3f3f3f);
    border-radius: 3px;
    color: #7d7d7d;
    font-size: 13px;
    font-weight: 700;
}

.fx-col {
    width: 53px;
    flex: none;
    margin-left: 3px;
    display: flex;
    flex-direction: column;
    background-color: #414141;
    border-radius: 3px;
}

.fx-box {
    height: 33px;
    display: flex;
    gap: 1px;
    padding: 5px 0 0 7px;
    position: relative;
    background-color: #2e2e2e;
    border-radius: 3px;
    color: #fff;
    font-size: 11.500px;
}

.fx-box b {
    margin: 4px 0 0 -5px;
}

.fx-bracket {
    position: absolute;
    left: 3px;
    right: 3px;
    top: 1px;
    height: 3px;
    border: 1px solid #4a7a94;
    border-bottom: 0;
}

.fx-strip {
    width: 8px;
    height: 23px;
    background-color: #4a4a4a;
}

.fx-output {
    margin-top: auto;
    margin-bottom: 4px;
    display: flex;
    flex-direction: column;
    align-items: center;
    color: #ccc;
    font-size: 11.500px;
    line-height: 14px;
}

/* status bar */
.statusbar {
    flex: 1;
    display: flex;
    align-items: center;
    padding-left: 21px;
    font-size: 11.500px;
    letter-spacing: -0.1px;
}

.st-info {
    width: 5px;
    color: #f47d0e;
    font-size: 16px;
    font-weight: 900;
    text-align: center;
}

.st-sep {
    width: 2px;
    height: 20px;
    margin: 0 14px 0 18px;
    background-color: #666;
}

.st-tab {
    margin-right: 15px;
    color: #b5b5b5;
    font-weight: 700;
    letter-spacing: -0.3px;
}

.st-tab.on {
    color: #f47d0e;
}

.st-tab:nth-of-type(4) {
    margin-right: 0;
}

.statusbar > svg {
    margin-right: 16px;
}

.statusbar > .st-first {
    margin-left: -3px;
}

.st-panel {
    width: 15px;
    height: 16px;
    margin: 0 12px 0 2px;
    border: 1.500px solid #f47d0e;
    border-radius: 2px;
    background: linear-gradient(90deg, #f47d0e 2px, #7a4f28 2px);
}

.st-hint {
    display: flex;
    gap: 7px;
    color: #8c8c8c;
    margin-right: 21px;
}

.st-hint.first {
    margin-left: 14px;
}

.st-hint b {
    color: #f2f2f2;
    font-size: 11px;
    letter-spacing: -0.35px;
}

.st-right {
    margin-left: auto;
    display: flex;
    align-items: center;
    gap: 17px;
    padding-right: 16px;
}

.st-piano {
    margin-left: 13px;
}
```

FILE: script.js
```js
// Colori delle tracce
const PINK = "#d6336c", BLUE = "#0a9bd8", LILAC = "#b36fe0", TAN = "#c49a6c", GOLD = "#d99a0e";
const OLIVE = "#6d8f10", PURPLE = "#8e44c4", RED = "#de2e22", PERI = "#8087dc", INDIGO = "#5059c0";

// Ogni posizione e' la x nello screenshot, ORIGIN e' il bordo sinistro della timeline
const ORIGIN = 438;
const A = 497, B = 634.5, C = 702, D = 908.6, E = 1079.6, F = 1216, G = 1353.5, H = 1421.7;
const I = 1491, J = 1628, K = 1644.4, L = 1657.8, M = 1678.4, N = 1815.6, O = 1901, END = 1913, Z = 463.5;

function eight() {
    const out = [];
    for (let n = 0; n < 8; n++) {
        out.push([M + n * 17.15, M + (n + 1) * 17.15]);
    }
    return out;
}

function drumClips(n, a, b) {
    return [
        [A, 531.5], [531.5, 565.7], [565.7, B, n + " " + a, "dim"],
        [668.6, C, "", "ghost", "#6d70a5"],
        [C, 738], [738, 771], [771, 805.7], [805.7, 874, n + " " + b, "dim"], [874, D],
        [E, F, n + " #11"], [F, G, n + " #12"], [G, H, n + " #13", "dim"],
        [H, I, "", "ghost", "#6d70a5"],
        [I, J, n + " #16"], [K, L], [M, N, n + " #18"]
    ];
}

const TRACKS = [
    { name: "Audio 1", color: GOLD, icon: "wave", mute: true, level: 55, clips: [[A, 534]] },
    { name: "DANCESAW", color: PINK, icon: "piano", level: 50, clips: [[A, B, "DANCESAW #1"], [C, D, "DANCESAW #2"], [G, H, "DANCESAV", "dim"], [I, J, "DANCESAW #4"], [K, L]] },
    { name: "SYNC BELLS", color: BLUE, icon: "piano", level: 60, clips: [[E, F, "SYNC BELLS #1"], [1302, G, "SYNC BI", "dim"], [K, L], [M, N, "SYNC BELLS #4"]] },
    { name: "Sync Accident", color: LILAC, icon: "piano", level: 70, clips: [[E, F, "Sync Accident #1"], [K, L], [M, N, "Sync Accident #3"]] },
    { name: "EBRASS", color: TAN, icon: "piano", level: 60, ghost: "#ac5a52", clips: [[A, B, "EBRASS #2"], [C, D, "EBRASS #3"], [E, H, "EBRASS #4"], [I, J, "EBRASS #5"], [K, L], [O, END]] },
    { name: "BELLS", color: GOLD, icon: "piano", level: 55, clips: [[C, D, "BELLS #1"], [E, F, "BELLS #2"], [F, G, "BELLS #3"], [I, J, "BELLS #4"], [K, L], [M, N, "BELLS #6"]] },
    { name: "STRINGS", color: OLIVE, icon: "piano", level: 55, clips: [[C, D, "STRINGS #1"], [E, F, "STRINGS #2"], [I, J, "STRINGS #3"], [K, L], [M, N, "STRINGS #5"]] },
    { name: "BIG CHOIR", color: OLIVE, icon: "piano", level: 55, clips: [[G, H, "BIG CHOIR", "dim"], [I, J, "BIG CHOIR #2"], [K, L], [M, N, "BIG CHOIR #4"]] },
    { name: "OFFBEATS", color: PURPLE, icon: "piano", level: 50, ghost: "#8863a0", clips: [[A, B, "OFFBEATS #2"], [C, D, "OFFBEATS #3"], [G, H, "OFFBEATS", "dim"], [I, J, "OFFBEATS #5"], [K, L], ...eight()] },
    { name: "DANCE PIANO", color: RED, icon: "piano", level: 50, clips: [[C, D, "DANCE PIANO"], [E, H, "DANCE PIANO #2"], [I, J, "DANCE PIANO #3", "muted"], [K, L], [M, 1747, "DANCE PIA"], [1747, N, "DANCE PIA"], [O, END]] },
    { name: "SEQ ARPY", color: PINK, icon: "piano", level: 40, ghost: "#a65a80", clips: [[A, 548.6, "SEQ ARI", "dim"], [548.6, 582.4], [582.4, B, "SEQ ARI", "dim"], [C, D, "SEQ ARPY #5"], [G, 1387.6], [1387.6, H], [I, J, "SEQ ARPY #8"], [K, L], ...eight()] },
    { name: "IMPACT", color: GOLD, icon: "piano", level: 50, clips: [[C, D, "IMPACT #1"], [E, H, "IMPACT #2"], [I, J, "IMPACT #3"], [K, L], [M, 1696]] },
    { name: "SEQ RHTM", color: PINK, icon: "piano", level: 50, clips: [[531.5, 565.7], [F, G, "SEQ RHTM #2"], [K, L], [M, N, "SEQ RHTM #4"]] },
    { name: "BASS", color: PERI, icon: "piano", level: 50, ghost: "#7578a8", clips: [[A, B, "BASS #2"], [C, D, "BASS #3"], [E, H, "BASS #4"], [I, J, "BASS #5"], [K, L], [M, N, "BASS #7"], [O, END]] },
    { name: "Crash - Club Dub ...", color: PURPLE, icon: "wave", level: 40, clips: [[1217, 1227], [G, 1364], [1653, 1662]] },
    { name: "Drums", color: INDIGO, icon: "piano", level: 55, arm: true, ghost: "#6d70a5", clips: drumClips("Drums", "#4", "#9") },
    { name: "Cymatics - Organi...", color: LILAC, icon: "wave", level: 50, clips: [[F, G, "", "black"]] }
];

const FX_TRACKS = [
    { name: "MA7 - Fat Plate", icon: "send", off: true, level: 90 },
    { name: "Long Decay", icon: "send", level: 90 },
    { name: "Master", icon: "crown", off: true, level: 90 }
];

// Clip delle cartelle: [inizio, fine, tagli dei segmenti, pallido]
const GROUP_CLIPS = [
    [Z, A, [], true], [A, B, [531.5, 565.7]], [668.6, C, [], true], [C, D, [738, 771, 805.7, 874]],
    [E, H, [F, G]], [H, 1456, [], true], [1456, I, [], true], [I, J, []], [K, 1661, []], [M, N, []], [O, END, []]
];

const tan = ["#b3946a", 15], gold = ["#c08a1a", 18], pink = ["#b8335f", 6], blue = ["#1488b8", 9], lila = ["#a060d0", 12];
const FOLD_CLIPS = [
    [Z, A, [[Z, A, "#a04a50", 14]]],
    [A, B, [[A, 533, "#b58a1a", 2], [A, B, ...pink], [A, B, ...tan]]],
    [668.6, C, []],
    [C, D, [[C, D, ...pink], [C, D, ...tan], [C, D, ...gold]]],
    [E, H, [[E, F, ...blue], [E, F, ...lila], [E, H, ...tan], [E, G, ...gold], [1302, G, ...blue], [G, H, ...pink]]],
    [H, 1456, []], [1456, I, []],
    [I, J, [[I, J, ...pink], [I, J, ...tan], [I, J, ...gold]]],
    [K, 1661, [[K, 1661, ...pink], [K, 1661, ...blue], [K, 1661, ...lila], [K, 1661, ...tan], [K, 1661, ...gold]]],
    [M, N, [[M, N, ...blue], [M, N, ...lila], [M, N, ...gold]]],
    [O, END, [[O, END, ...tan], [O, END, ...gold]]]
];

function el(tag, cls, text) {
    const node = document.createElement(tag);
    if (cls) node.className = cls;
    if (text !== undefined) node.textContent = text;
    return node;
}

function icon(name, w, h, x) {
    const wrap = document.createElementNS("http://www.w3.org/2000/svg", "svg");
    wrap.setAttribute("width", w);
    wrap.setAttribute("height", h);
    wrap.setAttribute("class", "track-icon");
    wrap.style.marginLeft = x + "px";
    const use = document.createElementNS("http://www.w3.org/2000/svg", "use");
    use.setAttribute("href", "#i-" + name);
    wrap.appendChild(use);
    return wrap;
}

// Riempie una riga della lista tracce
function fillTrack(row, t, strip, iconX) {
    if (strip) {
        const c = el("i", "track-color");
        c.style.backgroundColor = strip;
        row.appendChild(c);
    }
    const big = t.icon === "folder" || t.icon === "crown";
    row.appendChild(icon(t.icon, big ? 14 : 12, 12, iconX));
    row.appendChild(el("span", "track-name", t.name));

    const ctrl = el("div", "track-ctrl");
    const rec = el("span", "ctl rec" + (t.off ? " off" : "") + (t.arm ? " arm" : ""));
    rec.appendChild(el("i"));
    ctrl.appendChild(rec);
    ctrl.appendChild(el("span", "ctl", "S"));
    ctrl.appendChild(el("span", "ctl" + (t.mute ? " on" : ""), "M"));
    const lines = el("span", "ctl lines" + (t.menuOn ? " on" : ""));
    lines.appendChild(el("i"));
    ctrl.appendChild(lines);
    const fader = el("span", "fader");
    const lvl = el("i");
    lvl.style.height = t.level + "%";
    fader.appendChild(lvl);
    ctrl.appendChild(fader);
    ctrl.appendChild(el("span", "meter"));
    row.appendChild(ctrl);
}

function place(node, x1, x2) {
    node.style.left = (x1 - ORIGIN) + "px";
    node.style.width = (x2 - x1 + 1) + "px";
}

function addClip(lane, c, color) {
    const [x1, x2, label, kind, fill] = c;
    const clip = el("div", "clip", label || "");
    place(clip, x1, x2);
    clip.style.backgroundColor = fill || color;
    if (kind) clip.classList.add(kind);
    if (kind === "muted") {
        clip.classList.add("dim", "ghost");
        clip.style.backgroundColor = "#a85552";
        clip.style.color = "rgba(0,0,0,.3)";
    }
    if (kind === "black") clip.style.backgroundColor = "#000";
    lane.appendChild(clip);
}

// Lista tracce
fillTrack(document.getElementById("row-group"), { name: "Group 1", icon: "folder", off: true, menuOn: true, level: 85 }, null, 5);

const inner = document.getElementById("inner-tracks");
const first = el("div", "track");
fillTrack(first, { name: "Sidechained", icon: "folder", off: true, level: 85 }, null, 5);
inner.appendChild(first);
TRACKS.forEach(t => {
    const row = el("div", "track" + (t.name === "Drums" ? " selected" : ""));
    fillTrack(row, t, t.color, 7);
    inner.appendChild(row);
});

const kickRow = document.getElementById("row-kick");
fillTrack(kickRow, { name: "Kick", icon: "piano", level: 50 }, INDIGO, 6);
kickRow.firstChild.style.marginLeft = "1px";

const fxList = document.getElementById("fx-tracks");
FX_TRACKS.forEach(t => {
    const row = el("div", "track fx");
    fillTrack(row, t, "#707070", t.icon === "crown" ? 5 : 8);
    fxList.appendChild(row);
});

// Righello
const nums = document.getElementById("ruler-nums");
for (let bar = 1; bar <= 337; bar += 8) {
    nums.appendChild(el("span", "", bar));
}
const markers = document.getElementById("ruler-markers");
[[A, "Stage 1"], [C, "Stage 2"], [E, "Boss"], [I, "Titles"], [K, ""], [M, "STAGE CLEAR!"]].forEach(([x, name]) => {
    const m = el("span", "marker", name);
    m.style.left = (x - ORIGIN) + "px";
    markers.appendChild(m);
});

// Corsie della timeline
const lanes = document.getElementById("lanes");
const groupLane = el("div", "lane bright group-lane");
GROUP_CLIPS.forEach(([x1, x2, cuts, pale]) => {
    const clip = el("div", "clip fold top");
    place(clip, x1, x2);
    clip.appendChild(el("i", "hatch"));
    const low = el("div", "lowers" + (pale ? " pale" : ""));
    const points = [x1, ...cuts, x2];
    for (let n = 0; n < points.length - 1; n++) {
        const seg = el("i");
        seg.style.flexGrow = points[n + 1] - points[n];
        low.appendChild(seg);
    }
    clip.appendChild(low);
    groupLane.appendChild(clip);
});
lanes.appendChild(groupLane);
lanes.appendChild(el("div", "lane mid"));
lanes.appendChild(el("div", "lane bright tall"));

const foldLane = el("div", "lane");
FOLD_CLIPS.forEach(([x1, x2, stripes]) => {
    const clip = el("div", "clip fold");
    place(clip, x1, x2);
    stripes.forEach(([s1, s2, col, y]) => {
        const st = el("i", "stripe");
        st.style.left = Math.max(s1 - x1 + 1, 1) + "px";
        st.style.width = (s2 - s1 - 2) + "px";
        st.style.top = y + "px";
        st.style.backgroundColor = col;
        clip.appendChild(st);
    });
    foldLane.appendChild(clip);
});
lanes.appendChild(foldLane);

TRACKS.forEach(t => {
    const lane = el("div", "lane");
    if (t.ghost) addClip(lane, [Z, A, "", "ghost", t.ghost], t.color);
    t.clips.forEach(c => addClip(lane, c, t.color));
    lanes.appendChild(lane);
});

const kickLane = el("div", "lane kick");
addClip(kickLane, [Z, A, "", "ghost", "#6d70a5"], INDIGO);
drumClips("Kick", "#4", "#9").forEach(c => addClip(kickLane, c, INDIGO));
lanes.appendChild(kickLane);
lanes.appendChild(el("div", "lane blank"));
for (let n = 0; n < 3; n++) {
    lanes.appendChild(el("div", "lane bright"));
}

// Logo a puntini
const logo = document.getElementById("logo");
["...####.", "..#####.", "########", "###..###"].forEach((line, y) => {
    [...line].forEach((ch, x) => {
        if (ch !== "#") return;
        const dot = document.createElementNS("http://www.w3.org/2000/svg", "circle");
        dot.setAttribute("cx", 2 + x * 4.2);
        dot.setAttribute("cy", 2 + y * 4.2);
        dot.setAttribute("r", 1.7);
        dot.setAttribute("fill", "#bdbdbd");
        logo.appendChild(dot);
    });
});

// Schede della catena dispositivi
const chain = document.getElementById("chain-cards");
[["PROJECT", "crown", "#8a8a8a"], ["GROUP 1", "folder", "#7a9a12"], ["SIDECHAINED", "folder", "#00a343"], ["DRUMS", "piano", INDIGO]].forEach(([name, ic, col]) => {
    const card = el("div", "card");
    const top = el("i", "card-strip");
    top.style.backgroundColor = col;
    card.appendChild(top);
    card.insertAdjacentHTML("beforeend",
        `<svg class="card-icon" width="13" height="11" viewBox="0 0 ${ic === "piano" ? 12 : 14} 12"><use href="#i-${ic}"/></svg>` +
        `<span class="card-label">${name}</span>` +
        `<svg class="card-dial" width="9" height="9" viewBox="0 0 12 12" color="#ddd"><use href="#i-dial"/></svg>` +
        `<svg class="card-key" width="12" height="7" viewBox="0 0 14 8" color="#aaa"><use href="#i-key"/></svg>`);
    const low = el("i", "card-strip low");
    low.style.backgroundColor = col;
    card.appendChild(low);
    chain.appendChild(card);
});

// Manopole
function point(deg, r) {
    const rad = (deg - 90) * Math.PI / 180;
    return (r * Math.cos(rad)).toFixed(2) + " " + (r * Math.sin(rad)).toFixed(2);
}

function arc(a, b, r) {
    const large = Math.abs(b - a) > 180 ? 1 : 0;
    return `M${point(a, r)}A${r} ${r} 0 ${large} 1 ${point(b, r)}`;
}

function knobSvg(ptr, from, to, tri, size) {
    return `<svg width="${size}" height="${size}" viewBox="-23 -23 46 46">` +
        `<path d="${arc(-135, 135, 20.5)}" fill="none" stroke="#5a5a5a" stroke-width="2"/>` +
        `<path d="${arc(from, to, 20.5)}" fill="none" stroke="#f47d0e" stroke-width="2.5"/>` +
        `<circle r="16" fill="url(#knobFill)" stroke="#2a2a2a" stroke-width="1.5"/>` +
        `<path d="M${point(ptr, 8)}L${point(ptr, 15.5)}" stroke="#f2f2f2" stroke-width="2.5"/>` +
        `<path d="M-23 -22h5l-5 5z" fill="${tri}"/></svg>`;
}

const knobGrid = document.getElementById("knob-grid");
[
    ["KickTune", -10, -10, 0, "#e0203c"], ["SnareSnap", 86, -135, 86, "#f47d0e"],
    ["ClHatDec", -70, -135, -70, "#f0e010"], ["OpHatTn", -28, -28, 0, "#6aa510"],
    ["KickDec", 12, -135, 12, "#2fb574"], ["Over", -4, -135, -4, "#3f97dc"],
    ["CompMix", 140, -135, 135, "#b36fe0"], ["Output", 110, -135, 110, "#e858b0"]
].forEach(([name, ptr, a, b, tri]) => {
    const k = el("div", "knob");
    k.innerHTML = knobSvg(ptr, a, b, tri, 46) + `<span>${name}</span>`;
    knobGrid.appendChild(k);
});
document.getElementById("fx-output").innerHTML = knobSvg(110, -135, 110, "#e858b0", 38) + "<span>Output</span>";

// Colonna note
const noteCol = document.getElementById("note-col");
noteCol.appendChild(el("i", "note-clock"));
[" first", "", "", "", "", " sel", "", "", " tiny"].forEach(mod => {
    noteCol.appendChild(el("i", "note-block" + mod));
});

// Pad del drum machine
const pads = document.getElementById("pads");
["C2", "C#2", "D2", "D#2"].forEach(note => {
    const pad = el("div", "pad empty");
    pad.appendChild(el("span", "", note));
    pad.appendChild(el("span", "pad-plus", "+"));
    pads.appendChild(pad);
});
[
    ["E-Tom9Hi", 2], ["E-Tom9Lo", 2], ["E-Snare02", 1], ["v9 Crash", 2],
    ["v9TomMid", 2], ["E-Clap9Hi", 3], ["E-Rim9L02", 1], ["v9 Ride", 2],
    ["E-Kick901", 2], ["E-Snare02", 1], ["E-Hat901", 1], ["E-Hat902", 1]
].forEach(([name, cells]) => {
    const pad = el("div", "pad");
    pad.appendChild(el("div", "", name));
    pad.appendChild(el("i", "pad-bracket"));
    const row = el("div", "pad-cells");
    for (let n = 0; n < cells; n++) row.appendChild(el("i"));
    pad.appendChild(row);
    const foot = el("div", "pad-foot");
    foot.appendChild(el("i", "pad-play"));
    foot.appendChild(el("span", "", "S"));
    foot.appendChild(el("span", "", "M"));
    pad.appendChild(foot);
    pads.appendChild(pad);
});
```
